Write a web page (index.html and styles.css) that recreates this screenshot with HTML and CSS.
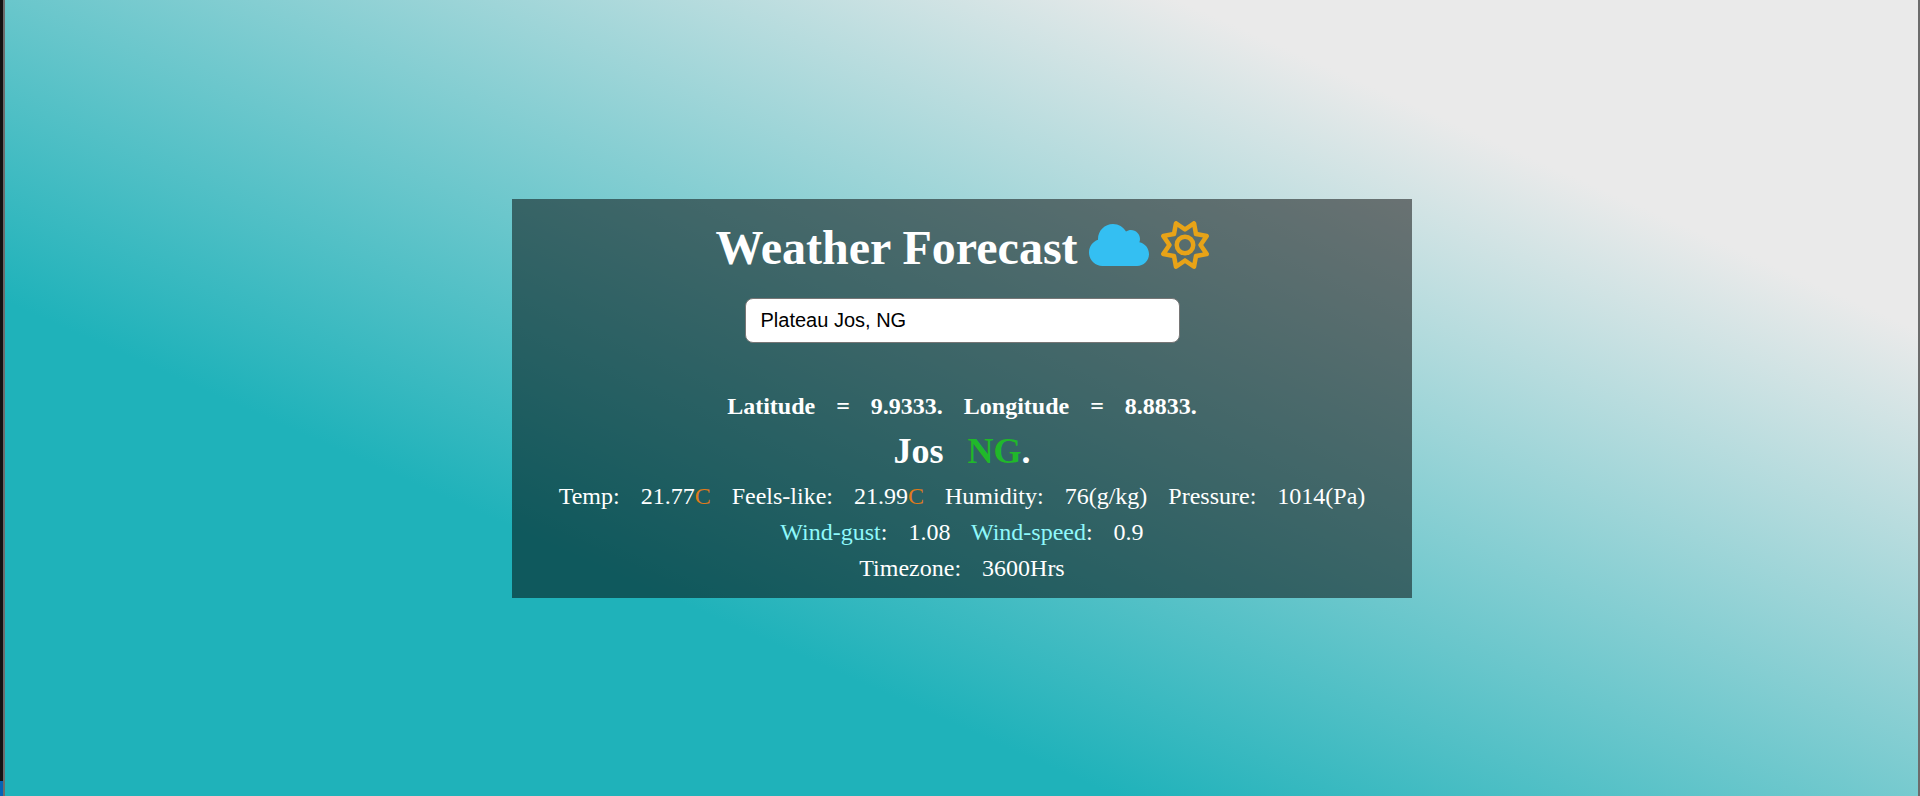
FILE: index.html
```html
<!DOCTYPE html>
<html lang="en">
<head>
<meta charset="utf-8">
<title>Weather Forecast</title>
<link rel="stylesheet" href="styles.css">
</head>
<body>
<div class="frame">
  <div class="rail"><span class="rail-accent"></span></div>
  <main class="app">
    <section class="panel">
      <h1 class="title">Weather Forecast
        <svg class="cloud" viewBox="0 0 640 512"><path fill="currentColor" d="M0 336c0 79.500 64.500 144 144 144l368 0c70.700 0 128-57.300 128-128c0-61.900-44-113.600-102.400-125.400c4.100-10.700 6.400-22.400 6.400-34.600c0-53-43-96-96-96c-19.700 0-38.100 6-53.300 16.200C367 64.200 315.300 32 256 32C167.600 32 96 103.600 96 192c0 2.700 .1 5.400 .2 8.100C40.200 219.800 0 273.200 0 336z"/></svg>
        <svg class="sun" viewBox="0 0 512 512"><path fill="currentColor" d="M375.700 19.700c-1.500-8-6.900-14.700-14.400-17.800s-16.100-2.200-22.800 2.400L256 61.100 173.500 4.200c-6.700-4.600-15.300-5.500-22.800-2.400s-12.900 9.800-14.400 17.800l-18.100 98.500L19.700 136.300c-8 1.500-14.700 6.900-17.800 14.400s-2.200 16.100 2.400 22.800L61.100 256 4.200 338.500c-4.600 6.700-5.500 15.300-2.400 22.800s9.800 13 17.800 14.400l98.500 18.100 18.100 98.500c1.500 8 6.900 14.700 14.400 17.800s16.100 2.200 22.800-2.400L256 450.900l82.500 56.900c6.700 4.600 15.300 5.500 22.800 2.400s12.900-9.800 14.400-17.800l18.100-98.500 98.500-18.100c8-1.500 14.700-6.900 17.800-14.400s2.200-16.100-2.400-22.800L450.900 256l56.900-82.500c4.600-6.700 5.500-15.300 2.400-22.800s-9.800-12.900-17.800-14.400l-98.500-18.100L375.700 19.700zM269.600 110l65.600-45.200 14.400 78.300c1.800 9.800 9.500 17.500 19.300 19.300l78.300 14.400L402 242.400c-5.700 8.200-5.700 19 0 27.200l45.200 65.600-78.300 14.400c-9.800 1.800-17.500 9.500-19.300 19.300l-14.400 78.300L269.600 402c-8.200-5.700-19-5.700-27.200 0l-65.600 45.200-14.400-78.300c-1.800-9.800-9.500-17.500-19.300-19.300L64.800 335.200 110 269.600c5.700-8.200 5.700-19 0-27.200L64.800 176.800l78.300-14.400c9.800-1.800 17.500-9.500 19.300-19.300l14.400-78.300L242.400 110c8.200 5.700 19 5.700 27.200 0zM256 368a112 112 0 1 0 0-224 112 112 0 1 0 0 224zM192 256a64 64 0 1 1 128 0 64 64 0 1 1 -128 0z"/></svg>
      </h1>
      <input class="search" type="text" value="Plateau Jos, NG">
      <p class="line coords">Latitude&nbsp;&nbsp; =&nbsp;&nbsp; 9.9333.&nbsp;&nbsp; Longitude&nbsp;&nbsp; =&nbsp;&nbsp; 8.8833.</p>
      <h2 class="place">Jos&nbsp; <span class="country">NG</span>.</h2>
      <p class="line">Temp:&nbsp;&nbsp; 21.77<span class="unit">C</span>&nbsp;&nbsp; Feels-like:&nbsp;&nbsp; 21.99<span class="unit">C</span>&nbsp;&nbsp; Humidity:&nbsp;&nbsp; 76(g/kg)&nbsp;&nbsp; Pressure:&nbsp;&nbsp; 1014(Pa)</p>
      <p class="line"><span class="wind">Wind-gust</span>:&nbsp;&nbsp; 1.08&nbsp;&nbsp; <span class="wind">Wind-speed</span>:&nbsp;&nbsp; 0.9</p>
      <p class="line">Timezone:&nbsp;&nbsp; 3600Hrs</p>
    </section>
  </main>
</div>
</body>
</html>
```
FILE: styles.css
```css
* { box-sizing: border-box; margin: 0; }
body { font-family: "Liberation Serif", "Times New Roman", serif; color: #fff; }
.frame { display: flex; height: 796px; background: #6c6c6c; padding-right: 2px; overflow: hidden; }
.rail { width: 3px; margin-right: 2px; background: #131313; display: flex; align-items: flex-end; }
.rail-accent { width: 3px; height: 15px; background: #0563b5; }
.app {
  flex: 1; display: flex; justify-content: center; align-items: flex-start; padding-top: 199px;
  background: linear-gradient(24deg, #1fb2ba 30%, #eaeaea 80%);
}
.panel {
  width: 900px; height: 399px; padding: 21px 0 12px 1px; background: rgba(0, 0, 0, 0.5);
  display: flex; flex-direction: column; align-items: center; text-align: center;
}
.title { font-size: 48px; line-height: 56px; height: 56px; white-space: nowrap; }
.title svg { height: 48px; vertical-align: -5px; overflow: visible; }
.cloud { width: 60px; margin-left: -1px; color: #34bff2; }
.sun { width: 48px; color: #e8a317; }
.search {
  width: 435px; height: 45px; margin: 22px 0 45px; padding: 0 15px;
  font: 20px "Liberation Sans", Arial, sans-serif; color: #000;
  background: #fff; border: 1px solid #767676; border-radius: 8px; outline: none;
}
.line { font-size: 24px; line-height: 36px; white-space: nowrap; word-spacing: 1px; }
.coords { font-weight: 700; }
.place { font-size: 36px; line-height: 54px; word-spacing: 3px; }
.country { color: #20b82a; }
.unit { color: #e07b1a; }
.wind { color: #8ff8fb; }
```
